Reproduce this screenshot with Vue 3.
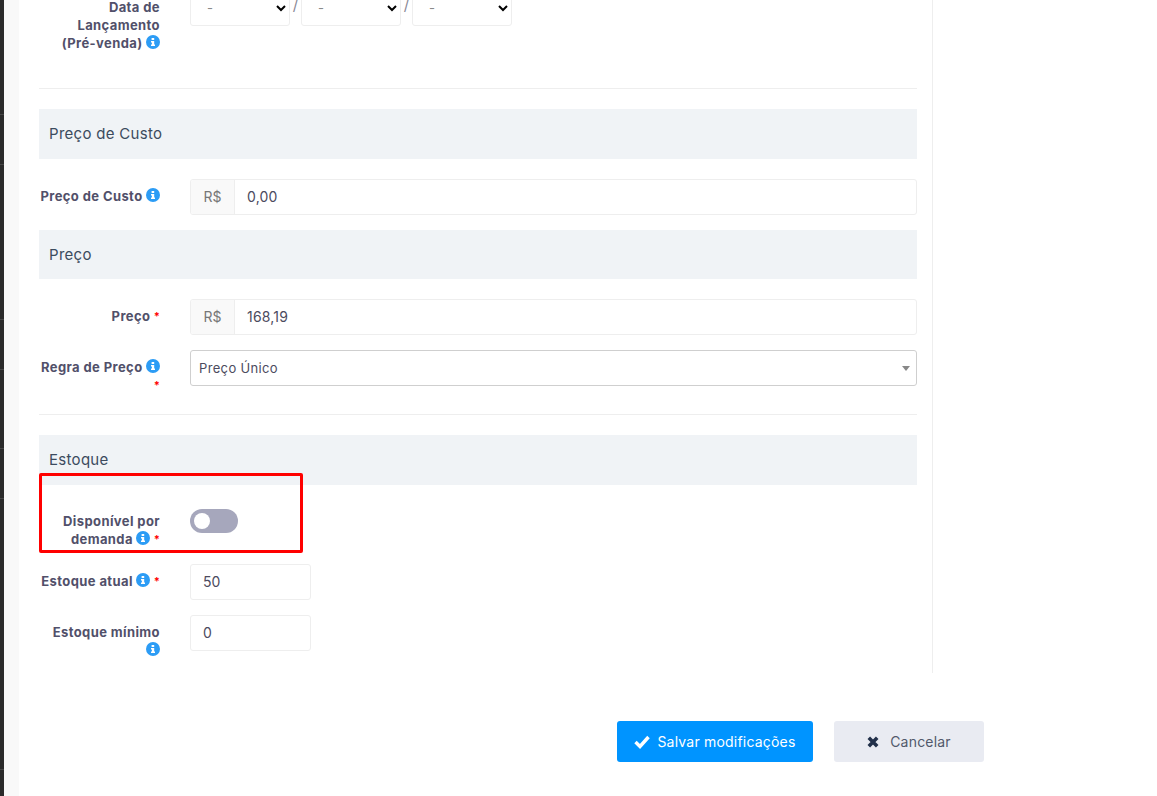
<script setup>
const dateParts = [1, 2, 3]
const railLines = [114, 164, 319, 369, 448, 498, 769]
</script>

<template>
  <div class="page">
    <div class="rail"><i v-for="y in railLines" :key="y" class="rail-line" :style="{ top: y + 'px' }"></i></div>
    <div class="gutter"></div>
    <main class="main">
      <section class="form">
        <div class="row row-date">
          <label class="lbl">Data de<br />Lançamento<br />(Pré-venda) <svg class="info" viewBox="0 0 14 14"><circle cx="7" cy="7" r="7" fill="#2c9cf5"/><path d="M5.6 3h2.6v1.9H5.6zM5 6h3.2v3.6H9V11H5V9.6h.9V7.4H5z" fill="#fff"/></svg></label>
          <div class="dates">
            <template v-for="(d, i) in dateParts" :key="d">
              <select class="date"><option>-</option></select>
              <span v-if="i < 2" class="slash">/</span>
            </template>
          </div>
        </div>
        <hr class="rule rule-top" />
        <h3 class="head">Preço de Custo</h3>
        <div class="row">
          <label class="lbl">Preço de Custo <svg class="info" viewBox="0 0 14 14"><circle cx="7" cy="7" r="7" fill="#2c9cf5"/><path d="M5.6 3h2.6v1.9H5.6zM5 6h3.2v3.6H9V11H5V9.6h.9V7.4H5z" fill="#fff"/></svg></label>
          <div class="group"><span class="addon">R$</span><span class="field">0,00</span></div>
        </div>
        <h3 class="head head-49">Preço</h3>
        <div class="row">
          <label class="lbl">Preço <span class="req">*</span></label>
          <div class="group"><span class="addon">R$</span><span class="field">168,19</span></div>
        </div>
        <div class="row">
          <label class="lbl">Regra de Preço <svg class="info" viewBox="0 0 14 14"><circle cx="7" cy="7" r="7" fill="#2c9cf5"/><path d="M5.6 3h2.6v1.9H5.6zM5 6h3.2v3.6H9V11H5V9.6h.9V7.4H5z" fill="#fff"/></svg><br /><span class="req">*</span></label>
          <div class="combo"><span>Preço Único</span><i class="caret"></i></div>
        </div>
        <hr class="rule rule-mid" />
        <h3 class="head">Estoque</h3>
        <div class="row row-toggle">
          <label class="lbl">Disponível por<br />demanda <svg class="info" viewBox="0 0 14 14"><circle cx="7" cy="7" r="7" fill="#2c9cf5"/><path d="M5.6 3h2.6v1.9H5.6zM5 6h3.2v3.6H9V11H5V9.6h.9V7.4H5z" fill="#fff"/></svg> <span class="req">*</span></label>
          <div class="toggle"><i class="knob"></i></div>
        </div>
        <div class="row">
          <label class="lbl">Estoque atual <svg class="info" viewBox="0 0 14 14"><circle cx="7" cy="7" r="7" fill="#2c9cf5"/><path d="M5.6 3h2.6v1.9H5.6zM5 6h3.2v3.6H9V11H5V9.6h.9V7.4H5z" fill="#fff"/></svg> <span class="req">*</span></label>
          <span class="field short">50</span>
        </div>
        <div class="row row-last">
          <label class="lbl">Estoque mínimo<br /><svg class="info" viewBox="0 0 14 14"><circle cx="7" cy="7" r="7" fill="#2c9cf5"/><path d="M5.6 3h2.6v1.9H5.6zM5 6h3.2v3.6H9V11H5V9.6h.9V7.4H5z" fill="#fff"/></svg></label>
          <span class="field short">0</span>
        </div>
        <div class="callout"></div>
      </section>
      <footer class="actions">
        <button class="btn save"><svg class="ico" viewBox="0 0 16 14"><path d="M1.5 7 6 11.5 14.5 2" fill="none" stroke="#fff" stroke-width="3.4"/></svg>Salvar modificações</button>
        <button class="btn cancel"><svg class="ico ico-x" viewBox="0 0 12 12"><path d="M1.8 1.8l8.4 8.4M10.2 1.8l-8.4 8.4" fill="none" stroke="#22304a" stroke-width="3.6"/></svg>Cancelar</button>
      </footer>
    </main>
  </div>
</template>

<style>
html, body { margin: 0; background: #fff; overflow: hidden; }
</style>

<style scoped>
.page { width: 1157px; height: 796px; overflow: hidden; display: flex; position: relative; font-family: Inter, "Noto Sans", sans-serif; color: #4c4b5e; }
.rail { width: 4px; background: #2b2b2b; position: relative; flex: none; }
.rail-line { position: absolute; left: 0; right: 0; height: 1px; background: #474747; }
.gutter { width: 15px; background: #f9f9f9; flex: none; }
.main { flex: none; width: 1138px; padding-left: 20px; box-sizing: border-box; margin-top: -10px; }
.form { width: 894px; box-sizing: border-box; padding-right: 15px; border-right: 1px solid #eeeeee; position: relative; }
.row { display: flex; gap: 30px; margin-bottom: 15px; align-items: flex-start; }
.lbl { width: 121px; flex: none; box-sizing: border-box; padding-top: 8px; text-align: right; font-size: 13px; line-height: 18px; font-weight: 700; color: #51506a; letter-spacing: .4px; white-space: nowrap; }
.info { width: 14px; height: 14px; vertical-align: -1px; }
.req { color: #f00; font-size: 11px; letter-spacing: 0; vertical-align: 1px; }
.dates { display: flex; align-items: flex-start; }
.date { width: 100px; height: 36px; background: #fff; border: 1px solid #eeeeee; border-radius: 3px; padding-left: 12px; color: #000; -webkit-text-fill-color: #8a8a8a; font-family: inherit; font-size: 13px; box-sizing: border-box; }
.slash { color: #8a8a96; font-size: 15px; width: 11px; text-align: center; line-height: 18px; margin-top: 6px; }
.rule { border: 0; border-top: 1px solid #eeeeee; margin: 0 0 20px; }
.rule-top { margin-top: 36px; }
.rule-mid { margin-top: 20px; }
.head { margin: 0 0 20px; height: 50px; box-sizing: border-box; background: #f0f3f6; padding: 0 10px; font-size: 15px; font-weight: 400; line-height: 50px; color: #3c4b5e; letter-spacing: .3px; }
.head-49 { height: 49px; line-height: 49px; }
.group { flex: 1; display: flex; height: 36px; box-sizing: border-box; border: 1px solid #eeeeee; border-radius: 3px; overflow: hidden; font-size: 14px; }
.addon { width: 44px; flex: none; box-sizing: border-box; background: #f9f9f9; border-right: 1px solid #eeeeee; text-align: center; line-height: 34px; color: #777; }
.group .field { flex: 1; border: 0; line-height: 34px; padding-left: 12px; color: #4c4b5e; letter-spacing: .2px; }
.field.short { width: 121px; height: 36px; box-sizing: border-box; border: 1px solid #eeeeee; border-radius: 3px; padding-left: 12px; line-height: 34px; font-size: 14px; color: #4c4b5e; }
.combo { flex: 1; height: 36px; box-sizing: border-box; border: 1px solid #cfcfcf; border-radius: 3px; display: flex; align-items: center; justify-content: space-between; padding: 0 6px 0 8px; font-size: 13px; color: #4c4b5e; letter-spacing: .35px; }
.caret { width: 0; height: 0; border-left: 4px solid transparent; border-right: 4px solid transparent; border-top: 5px solid #888; }
.row-toggle { margin-top: -1px; margin-bottom: 16px; }
.toggle { width: 48px; height: 24px; margin-top: 5px; border-radius: 12px; background: #a6a7bc; display: flex; align-items: center; padding-left: 4px; box-sizing: border-box; }
.knob { width: 16px; height: 16px; border-radius: 50%; background: #fff; }
.row-last { margin-bottom: 0; padding-bottom: 14px; }
.callout { position: absolute; left: 0; top: 483px; width: 264px; height: 80px; box-sizing: border-box; border: 3px solid #f00; border-radius: 2px; }
.actions { display: flex; justify-content: flex-end; gap: 21px; margin-top: 48px; padding-right: 173px; }
.btn { height: 41px; border: 0; border-radius: 3px; font-family: inherit; font-size: 14px; display: flex; align-items: center; justify-content: center; box-sizing: border-box; letter-spacing: .2px; }
.save { width: 196px; background: #0094ff; color: #fff; }
.cancel { width: 150px; background: #e9ebf2; color: #51596b; }
.ico { width: 16px; height: 14px; margin-right: 7px; }
.ico-x { width: 12px; height: 12px; margin-right: 11px; }
</style>
